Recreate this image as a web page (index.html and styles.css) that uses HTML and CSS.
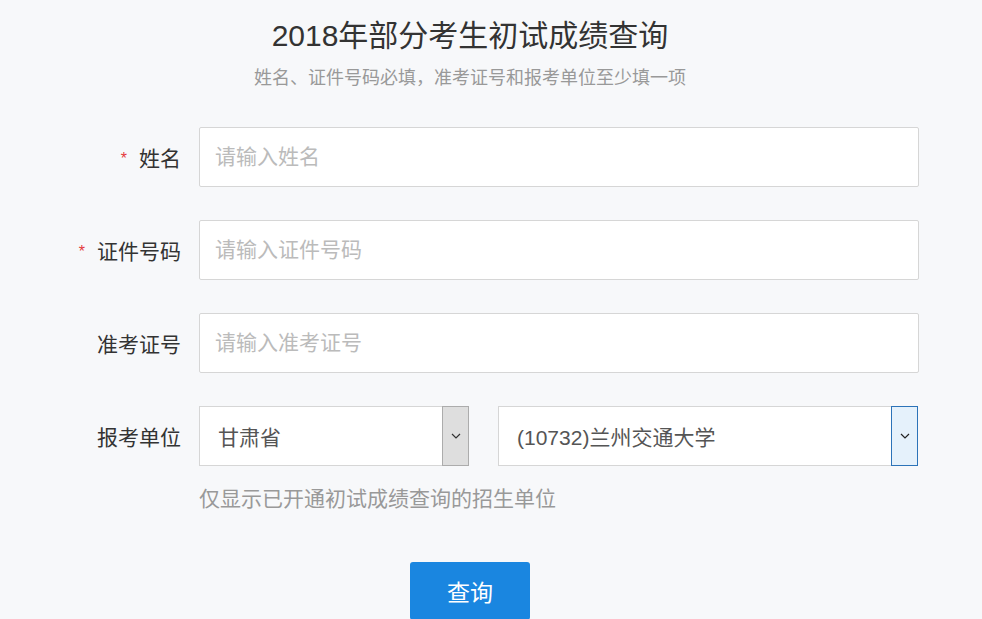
FILE: index.html
```html
<!DOCTYPE html>
<html lang="zh-CN">
<head>
    <meta charset="UTF-8">
    <meta name="viewport" content="width=device-width, initial-scale=1.0">
    <title>2018年部分考生初试成绩查询</title>
    <link rel="stylesheet" href="styles.css">
</head>
<body>
    <div class="wrap">
        <h1 class="title">2018年部分考生初试成绩查询</h1>
        <p class="subtitle">姓名、证件号码必填，准考证号和报考单位至少填一项</p>

        <form class="query-form">
            <div class="row">
                <label class="label"><span class="req">*</span>姓名</label>
                <input class="field" type="text" placeholder="请输入姓名">
            </div>
            <div class="row">
                <label class="label"><span class="req">*</span>证件号码</label>
                <input class="field" type="text" placeholder="请输入证件号码">
            </div>
            <div class="row">
                <label class="label">准考证号</label>
                <input class="field" type="text" placeholder="请输入准考证号">
            </div>
            <div class="row">
                <label class="label">报考单位</label>
                <div class="selects">
                    <div class="select select-province">
                        <span class="select-text">甘肃省</span>
                        <span class="select-arrow">
                            <svg width="10" height="6" viewBox="0 0 10 6"><path d="M1 1l4 4 4-4" fill="none" stroke="#333" stroke-width="1.2"/></svg>
                        </span>
                    </div>
                    <div class="select select-school">
                        <span class="select-text">(10732)兰州交通大学</span>
                        <span class="select-arrow active">
                            <svg width="10" height="6" viewBox="0 0 10 6"><path d="M1 1l4 4 4-4" fill="none" stroke="#222" stroke-width="1.2"/></svg>
                        </span>
                    </div>
                </div>
            </div>
            <p class="hint">仅显示已开通初试成绩查询的招生单位</p>
            <div class="actions">
                <button type="button" class="btn">查询</button>
            </div>
        </form>
    </div>
</body>
</html>
```

FILE: styles.css
```css
:root {
    --bg: #f7f8fa;
    --border: #d6d6d6;
    --text: #333;
    --muted: #999;
    --blue: #1a86e0;
}

body {
    margin: 0;
    background: var(--bg);
    color: var(--text);
    font-family: "Liberation Sans", "Noto Sans CJK SC", sans-serif;
    overflow: hidden;
}

.wrap {
    width: 896px;
    margin-left: 22px;
    padding-top: 16px;
}

.title {
    margin: 0;
    font-size: 30px;
    font-weight: normal;
    line-height: 40px;
    text-align: center;
    color: #333;
}

.subtitle {
    margin: 10px 0 0;
    font-size: 18px;
    line-height: 24px;
    text-align: center;
    color: #999;
}

.query-form {
    margin-top: 37px;
}

.row {
    display: grid;
    grid-template-columns: 177px 1fr;
    align-items: center;
    margin-bottom: 33px;
}

.row:nth-child(4) {
    margin-bottom: 0;
}

.label {
    padding-right: 18px;
    text-align: right;
    font-size: 21px;
    color: #333;
}

.req {
    margin-right: 12px;
    color: #e4393c;
    font-size: 16px;
    vertical-align: 2px;
}

.field {
    box-sizing: border-box;
    height: 60px;
    width: 720px;
    padding: 0 15px;
    border: 1px solid var(--border);
    border-radius: 2px;
    background: #fff;
    font-family: inherit;
    font-size: 21px;
    color: #333;
    outline: none;
}

.field::placeholder {
    color: #bbb;
}

.selects {
    display: flex;
    gap: 29px;
}

.select {
    box-sizing: border-box;
    display: flex;
    height: 60px;
    border: 1px solid var(--border);
    background: #fff;
    font-size: 21px;
    color: #555;
}

.select-province {
    width: 270px;
}

.select-school {
    width: 420px;
}

.select-text {
    flex: 1;
    display: flex;
    align-items: center;
    padding-left: 18px;
}

.select-arrow {
    box-sizing: border-box;
    width: 27px;
    margin: -1px -1px -1px 0;
    display: flex;
    align-items: center;
    justify-content: center;
    border: 1px solid #acacac;
    background: #dedede;
}

.select-arrow.active {
    border-color: #2c73b8;
    background: #e5f1fb;
}

.hint {
    margin: 21px 0 0 177px;
    font-size: 21px;
    line-height: 24px;
    color: #999;
}

.actions {
    margin-top: 51px;
    text-align: center;
}

.btn {
    width: 120px;
    height: 58px;
    border: none;
    border-radius: 3px;
    background: var(--blue);
    color: #fff;
    font-family: inherit;
    font-size: 23px;
    cursor: pointer;
}
```
